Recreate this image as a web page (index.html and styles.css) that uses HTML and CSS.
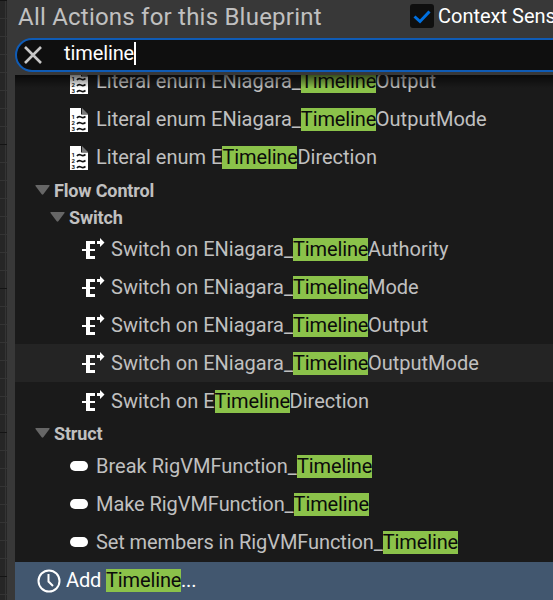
FILE: index.html
```
<!DOCTYPE html>
<html lang="en">
<head>
<meta charset="utf-8">
<title>Blueprint actions</title>
<link rel="stylesheet" href="styles.css">
</head>
<body>
<svg class="defs" aria-hidden="true">
  <symbol id="doc" viewBox="0 0 18 24">
    <path d="M0 0H11V6.500H18V24H0Z" fill="#fff"/>
    <path d="M12 0L18 6H12Z" fill="#777"/>
    <path d="M7 10C8.500 7.500 10 8.500 11.500 9.300S14 9.500 15.500 8.500M7 16C8.500 13.500 10 14.500 11.500 15.300S14 15.500 15.500 14.500M7 22C8.500 19.500 10 20.500 11.500 21.300S14 21.500 15.500 20.500" fill="none" stroke="#111" stroke-width="1.600"/>
  </symbol>
  <symbol id="switch" viewBox="0 0 24 24">
    <path d="M0 11H13V13H0ZM4 3H13V6H8V18H13V21H4ZM15 3H18V0L22.500 4.500L18 9V6H15Z" fill="#fff"/>
  </symbol>
</svg>
<main class="panel">
  <header class="head">
    <h1 class="title">All Actions for this Blueprint</h1>
    <span class="check"><svg width="24" height="24" viewBox="0 0 24 24"><path d="M4.500 12.500L10 17.500L19.500 7.500" fill="none" stroke="#0070e0" stroke-width="3"/></svg></span>
    <span class="context">Context Sensitive</span>
  </header>
  <div class="search">
    <svg class="clear" width="18" height="18" viewBox="0 0 18 18"><path d="M1 1L17 17M17 1L1 17" stroke="#c8c8c8" stroke-width="2.600"/></svg>
    <span class="query">timeline</span><span class="caret"></span>
  </div>
  <section class="list">
    <div class="rows">
      <div class="row"><svg class="doc" viewBox="0 0 18 24"><use href="#doc"/><g class="digits"><text x="1.500" y="11">1</text><text x="1.500" y="17">2</text><text x="1.500" y="23">3</text></g></svg><span>Literal enum ENiagara_<mark>Timeline</mark>Output</span></div>
      <div class="row"><svg class="doc" viewBox="0 0 18 24"><use href="#doc"/><g class="digits"><text x="1.500" y="11">1</text><text x="1.500" y="17">2</text><text x="1.500" y="23">3</text></g></svg><span>Literal enum ENiagara_<mark>Timeline</mark>OutputMode</span></div>
      <div class="row"><svg class="doc" viewBox="0 0 18 24"><use href="#doc"/><g class="digits"><text x="1.500" y="11">1</text><text x="1.500" y="17">2</text><text x="1.500" y="23">3</text></g></svg><span>Literal enum E<mark>Timeline</mark>Direction</span></div>
      <div class="group"><svg class="arrow" viewBox="0 0 15 10"><path d="M1 0H14Q15 0 14.500 1L8.300 9.300Q7.500 10 6.700 9.300L.5 1Q0 0 1 0Z"/></svg>Flow Control</div>
      <div class="group nested"><svg class="arrow" viewBox="0 0 15 10"><path d="M1 0H14Q15 0 14.500 1L8.300 9.300Q7.500 10 6.700 9.300L.5 1Q0 0 1 0Z"/></svg>Switch</div>
      <div class="row deep"><svg class="switch"><use href="#switch"/></svg><span>Switch on ENiagara_<mark>Timeline</mark>Authority</span></div>
      <div class="row deep"><svg class="switch"><use href="#switch"/></svg><span>Switch on ENiagara_<mark>Timeline</mark>Mode</span></div>
      <div class="row deep"><svg class="switch"><use href="#switch"/></svg><span>Switch on ENiagara_<mark>Timeline</mark>Output</span></div>
      <div class="row deep hover"><svg class="switch"><use href="#switch"/></svg><span>Switch on ENiagara_<mark>Timeline</mark>OutputMode</span></div>
      <div class="row deep"><svg class="switch"><use href="#switch"/></svg><span>Switch on E<mark>Timeline</mark>Direction</span></div>
      <div class="group last"><svg class="arrow" viewBox="0 0 15 10"><path d="M1 0H14Q15 0 14.500 1L8.300 9.300Q7.500 10 6.700 9.300L.5 1Q0 0 1 0Z"/></svg>Struct</div>
      <div class="row struct break"><i class="pill"></i><span>Break RigVMFunction_<mark>Timeline</mark></span></div>
      <div class="row struct"><i class="pill"></i><span>Make RigVMFunction_<mark>Timeline</mark></span></div>
      <div class="row struct members"><i class="pill"></i><span>Set members in RigVMFunction_<mark>Timeline</mark></span></div>
      <div class="row struct selected"><svg class="clock" viewBox="0 0 24 24"><circle cx="12" cy="12" r="10.500"/><path d="M11.500 5V12.500L16 17"/></svg><span>Add <mark>Timeline</mark>...</span></div>
    </div>
  </section>
</main>
</body>
</html>
```
FILE: styles.css
```
* { box-sizing: border-box; }
body {
  margin: 0;
  width: 553px;
  height: 600px;
  overflow: hidden;
  padding-left: 7px;
  background:
    repeating-linear-gradient(to bottom, #141414 0 1px, transparent 1px 144px),
    repeating-linear-gradient(to bottom, #343434 0 1px, transparent 1px 18px),
    linear-gradient(to right, transparent 5px, #343434 5px 6px, transparent 6px),
    #262626;
  font: 20px/23px Roboto, sans-serif;
  color: #c0c0c0;
}
.defs { position: absolute; width: 0; height: 0; }
.digits { font: bold 6px Roboto, sans-serif; fill: #111; }
.panel {
  height: 600px;
  padding-left: 8px;
  background: #383838;
  display: flex;
  flex-direction: column;
}
.head { height: 38px; display: flex; align-items: flex-start; white-space: nowrap; overflow: hidden; }
.title {
  flex: none;
  margin: 2px 0 0 3px;
  width: 392px;
  font-size: 24px;
  line-height: 30px;
  font-weight: 400;
  letter-spacing: .22px;
}
.check {
  flex: none;
  width: 24px;
  height: 24px;
  margin-top: 4px;
  border-radius: 3px;
  background: #0f0f0f;
}
.check svg { display: block; }
.context { margin: 5px 0 0 4px; color: #fff; }
.search {
  flex: none;
  display: flex;
  align-items: center;
  height: 34px;
  margin-right: -20px;
  padding-left: 7px;
  border: 2px solid #0f5bb5;
  border-radius: 17px;
  background: #0f0f0f;
  color: #fff;
}
.clear { margin-right: 22px; }
.query { margin-top: -3px; letter-spacing: -.1px; }
.caret { width: 2px; height: 23px; margin-top: -3px; background: #fff; }
.list {
  position: relative;
  height: 525px;
  margin-top: 3px;
  overflow: hidden;
  background: #1a1a1a;
}
.list::before {
  content: "";
  position: absolute;
  z-index: 1;
  inset: 0 0 auto;
  height: 13px;
  background: linear-gradient(rgba(0, 0, 0, .6), transparent);
}
.rows { margin-top: -13px; }
.row {
  display: flex;
  align-items: flex-start;
  height: 38px;
  padding: 8px 0 0 55px;
  white-space: nowrap;
}
.row mark {
  display: inline-block;
  width: 75px;
  height: 23px;
  background: #8bc24a;
  color: #0b0b0b;
  letter-spacing: -.12px;
}
.doc { width: 18px; height: 24px; margin-right: 8px; }
.deep { padding-left: 67px; }
.switch { width: 24px; height: 24px; margin-right: 5px; }
.hover { background: #242424; }
.struct { padding-top: 7px; letter-spacing: -.06px; }
.break { letter-spacing: .02px; }
.members { letter-spacing: -.09px; }
.pill { width: 18px; height: 10px; margin: 6px 8px 0 0; border-radius: 5px; background: #fff; }
.selected { padding-left: 22px; background: #42576f; color: #fff; letter-spacing: -.15px; }
.clock { width: 24px; height: 24px; margin-right: 5px; fill: none; stroke: #fff; stroke-width: 2; }
.group {
  display: flex;
  align-items: center;
  height: 27px;
  padding: 2px 0 0 19.5px;
  font-size: 18px;
  font-weight: 700;
  letter-spacing: -.15px;
}
.nested { padding-left: 34.5px; }
.last { height: 28px; padding-top: 0; padding-bottom: 1px; }
.arrow { width: 15px; height: 10px; margin: -2px 4.5px 0 0; fill: #666; }
```
